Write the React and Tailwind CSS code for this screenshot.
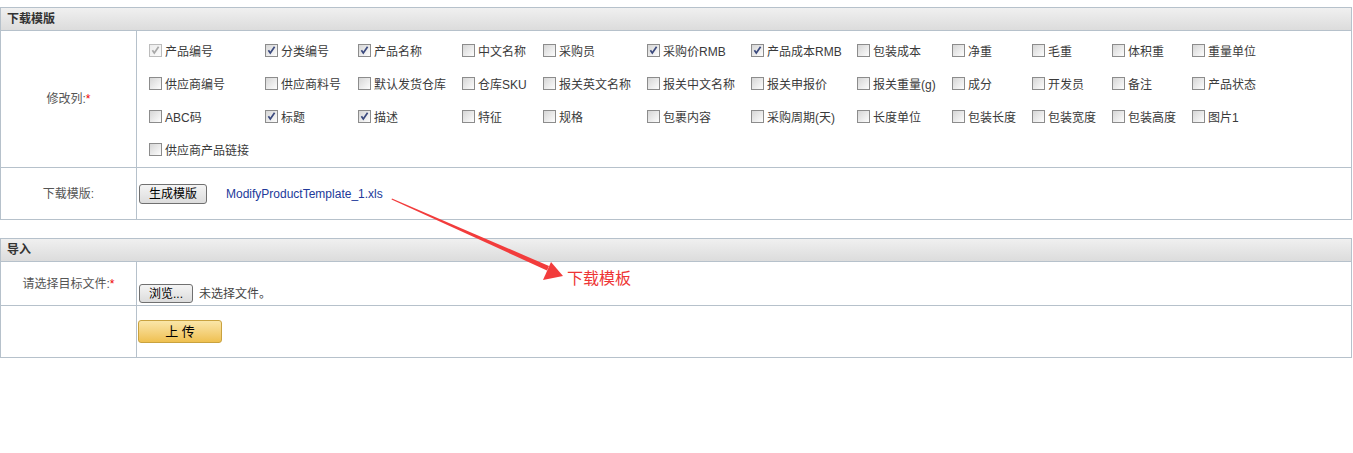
import React from "react";

const FONT = { fontFamily: '"Liberation Sans", Arial, "Noto Sans CJK SC", sans-serif' };

const rows = [
  [["产品编号", "d"], ["分类编号", 1], ["产品名称", 1], ["中文名称"], ["采购员"], ["采购价RMB", 1], ["产品成本RMB", 1], ["包装成本"], ["净重"], ["毛重"], ["体积重"], ["重量单位"]],
  [["供应商编号"], ["供应商料号"], ["默认发货仓库"], ["仓库SKU"], ["报关英文名称"], ["报关中文名称"], ["报关申报价"], ["报关重量(g)"], ["成分"], ["开发员"], ["备注"], ["产品状态"]],
  [["ABC码"], ["标题", 1], ["描述", 1], ["特征"], ["规格"], ["包裹内容"], ["采购周期(天)"], ["长度单位"], ["包装长度"], ["包装宽度"], ["包装高度"], ["图片1"]],
  [["供应商产品链接"]],
];

function Box({ state }) {
  const disabled = state === "d";
  const checked = !!state;
  return (
    <span
      className={
        "relative inline-block w-[13px] h-[13px] shrink-0 border " +
        (disabled
          ? "border-[#bcbcbc] bg-linear-to-br from-[#ececec] to-[#fbfbfb]"
          : "border-[#8c8c8c] bg-linear-to-br from-[#d6d6d6] to-[#fdfdfd]")
      }
    >
      {checked && (
        <svg className="absolute left-0 top-0" width="11" height="11" viewBox="0 0 11 11">
          <path
            d="M2.4 5.2 L4.3 7.9 L8.6 1.8"
            fill="none"
            stroke={disabled ? "#a8a8a8" : "#3b4a7e"}
            strokeWidth="1.7"
          />
        </svg>
      )}
    </span>
  );
}

function Header({ children }) {
  return (
    <div className="h-[23px] border-b border-[#b6c1cb] bg-linear-to-b from-[#f0f0f0] to-[#dcdcdc] pl-[6px] flex items-center text-[12px] font-bold text-[#333]">
      {children}
    </div>
  );
}

function Label({ children, star, className = "" }) {
  return (
    <div className={"w-[136px] shrink-0 border-r border-[#b6c1cb] flex justify-center text-[12px] text-[#555] " + className}>
      <span>
        {children}
        {star && <span className="text-[#e00]">*</span>}
      </span>
    </div>
  );
}

function OldButton({ children, className = "" }) {
  return (
    <span
      className={
        "inline-flex items-center justify-center border border-[#707070] rounded-[3px] bg-linear-to-b from-[#f4f4f4] to-[#dcdcdc] text-[12px] text-black " +
        className
      }
    >
      {children}
    </span>
  );
}

export default function App() {
  return (
    <div className="relative w-[1353px] h-[453px] bg-white pt-[7px]" style={FONT}>
      {/* Section 1 */}
      <div className="w-[1352px] border border-[#b6c1cb]">
        <Header>下载模版</Header>
        <div className="flex border-b border-[#b6c1cb] h-[137px]">
          <Label star className="items-center">修改列:</Label>
          <div className="pt-[3px] pl-[12px]">
            {rows.map((r, i) => (
              <div
                key={i}
                className="grid h-[33px] grid-cols-[116px_93px_104px_81px_104px_104px_106px_95px_80px_80px_80px_100px] items-center"
              >
                {r.map(([t, s]) => (
                  <div key={t} className="flex items-center gap-[3px] text-[12px] text-[#3a3a3a] whitespace-nowrap">
                    <Box state={s} />
                    <span className="leading-[16px] mt-[2px]">{t}</span>
                  </div>
                ))}
              </div>
            ))}
          </div>
        </div>
        <div className="flex h-[51px]">
          <Label className="items-center">下载模版:</Label>
          <div className="flex items-center pl-[2px]">
            <OldButton className="w-[68px] h-[20px]">生成模版</OldButton>
            <span className="ml-[19px] text-[12px] text-[#22399a]">ModifyProductTemplate_1.xls</span>
          </div>
        </div>
      </div>

      {/* Section 2 */}
      <div className="mt-[18px] w-[1352px] border border-[#b6c1cb]">
        <Header>导入</Header>
        <div className="flex border-b border-[#b6c1cb] h-[44px]">
          <Label star className="items-center">请选择目标文件:</Label>
          <div className="flex items-center pl-[2px] pt-[20px]">
            <OldButton className="w-[54px] h-[19px]">浏览...</OldButton>
            <span className="ml-[6px] text-[12px] text-[#444]">未选择文件。</span>
          </div>
        </div>
        <div className="flex h-[51px]">
          <Label />
          <div className="pl-[1px] pt-[14px]">
            <span className="flex items-center justify-center w-[84px] h-[23px] border border-[#c9a23f] rounded-[3px] bg-linear-to-b from-[#fae6a8] to-[#efc04f] text-[13px] text-black">
              上 传
            </span>
          </div>
        </div>
      </div>

      {/* Annotation arrow */}
      <svg className="absolute left-0 top-0 pointer-events-none" width="1353" height="453">
        <polygon points="392,198.5 549,266 547,270.5 391.5,199.5" fill="#f23c3c" />
        <polygon points="563,276 551,262 543,280" fill="#f23c3c" />
      </svg>
      <span className="absolute left-[567px] top-[268px] text-[16px] leading-[22px] text-[#ee3535]">下载模板</span>
    </div>
  );
}
